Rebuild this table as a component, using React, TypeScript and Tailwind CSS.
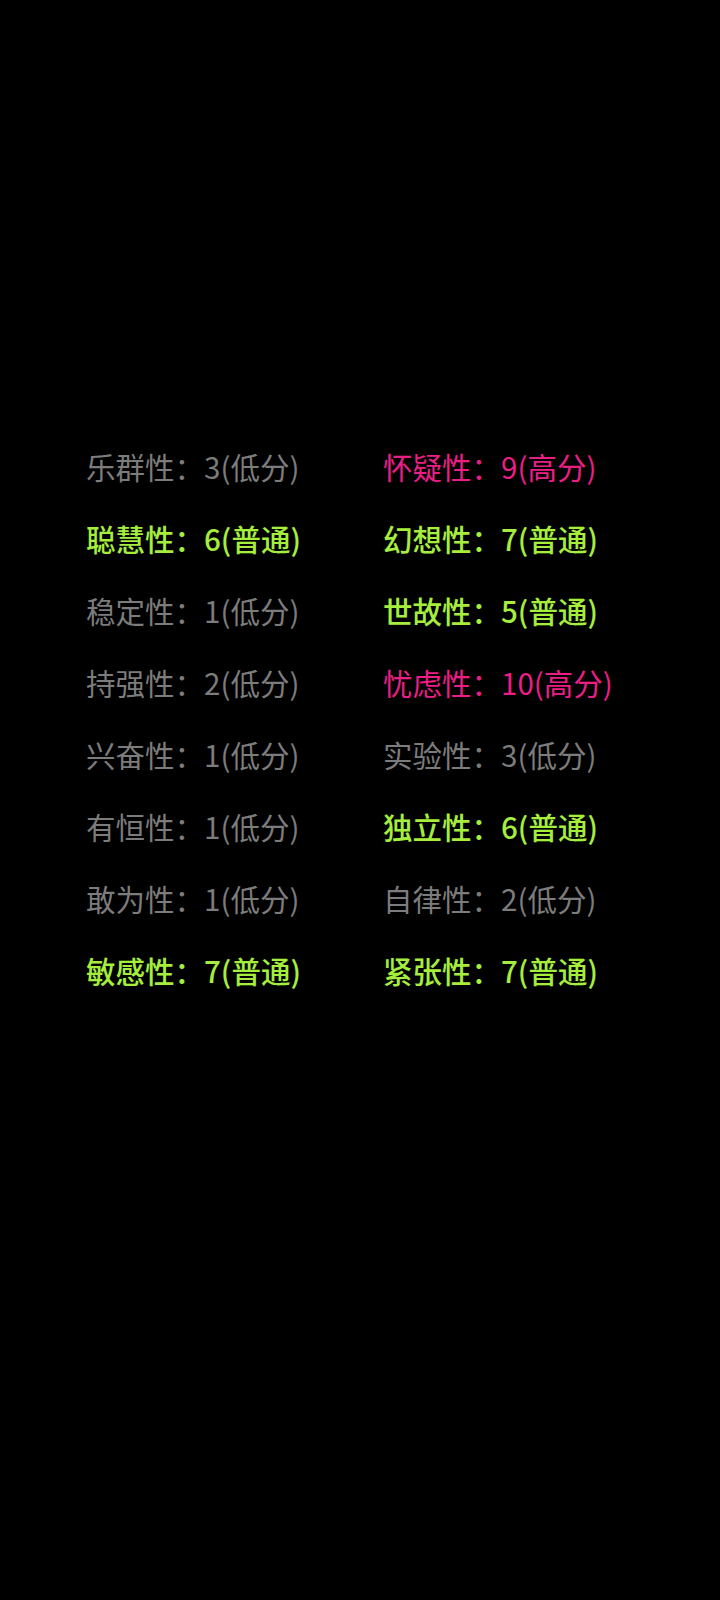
const GRAY = 'gray';
const GREEN = 'green';
const PINK = 'pink';

type Trait = { name: string; score: number; level: string; tone: string };

const rows: [Trait, Trait][] = [
    [
        { name: '乐群性', score: 3, level: '低分', tone: GRAY },
        { name: '怀疑性', score: 9, level: '高分', tone: PINK },
    ],
    [
        { name: '聪慧性', score: 6, level: '普通', tone: GREEN },
        { name: '幻想性', score: 7, level: '普通', tone: GREEN },
    ],
    [
        { name: '稳定性', score: 1, level: '低分', tone: GRAY },
        { name: '世故性', score: 5, level: '普通', tone: GREEN },
    ],
    [
        { name: '持强性', score: 2, level: '低分', tone: GRAY },
        { name: '忧虑性', score: 10, level: '高分', tone: PINK },
    ],
    [
        { name: '兴奋性', score: 1, level: '低分', tone: GRAY },
        { name: '实验性', score: 3, level: '低分', tone: GRAY },
    ],
    [
        { name: '有恒性', score: 1, level: '低分', tone: GRAY },
        { name: '独立性', score: 6, level: '普通', tone: GREEN },
    ],
    [
        { name: '敢为性', score: 1, level: '低分', tone: GRAY },
        { name: '自律性', score: 2, level: '低分', tone: GRAY },
    ],
    [
        { name: '敏感性', score: 7, level: '普通', tone: GREEN },
        { name: '紧张性', score: 7, level: '普通', tone: GREEN },
    ],
];

const toneClass: Record<string, string> = {
    gray: 'text-[#7c7c7c]',
    green: 'text-[#a6ee3e] font-medium',
    pink: 'text-[#ea1f86]',
};

function TraitCell({ trait }: { trait: Trait }) {
    return (
        <div className={`h-[72px] leading-[72px] whitespace-nowrap ${toneClass[trait.tone]}`}>
            {trait.name}：{trait.score}({trait.level})
        </div>
    );
}

export default function App() {
    return (
        <div
            className="min-h-[1600px] w-[720px] bg-black pt-[430px] pl-[86px] text-[29.5px]"
            style={{ fontFamily: '"Noto Sans CJK SC", "Noto Sans", sans-serif' }}
        >
            <div className="grid grid-cols-[297px_1fr]">
                {rows.map(([left, right]) => (
                    <div key={left.name} className="contents">
                        <TraitCell trait={left} />
                        <TraitCell trait={right} />
                    </div>
                ))}
            </div>
        </div>
    );
}
